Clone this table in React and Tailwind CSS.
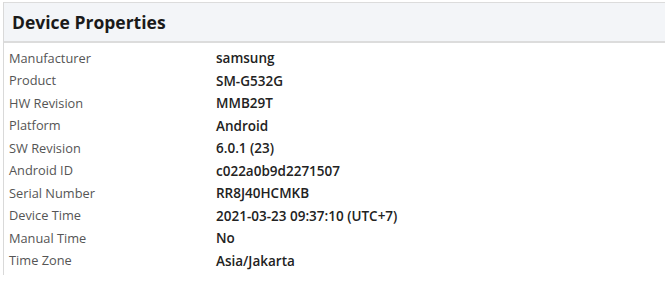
export default function App() {
  const rows = [
    ["Manufacturer", "samsung"],
    ["Product", "SM-G532G"],
    ["HW Revision", "MMB29T"],
    ["Platform", "Android"],
    ["SW Revision", "6.0.1 (23)"],
    ["Android ID", "c022a0b9d2271507"],
    ["Serial Number", "RR8J40HCMKB"],
    ["Device Time", "2021-03-23 09:37:10 (UTC+7)"],
    ["Manual Time", "No"],
    ["Time Zone", "Asia/Jakarta"],
  ];
  return (
    <div className="w-[665px] h-[283px] bg-white overflow-hidden pt-[2px] pl-[3px]" style={{ fontFamily: '"Open Sans", sans-serif' }}>
      <div className="border-l border-[#d9d9d9] h-[273px]">
        <div className="h-[41px] bg-[#f3f5f8] border-t border-b-2 border-[#dcdcdc] flex items-center pl-[8px] pt-[2px]">
          <span className="text-[17.5px] font-bold text-[#1a1a1a] leading-none">Device Properties</span>
        </div>
        <div className="pt-[4px]">
          {rows.map(([k, v]) => (
            <div key={k} className="flex h-[22.5px] items-center">
              <div className="w-[212px] pl-[5px] text-[12.8px] text-[#555]">{k}</div>
              <div className="font-semibold text-[13.5px] text-[#222]">{v}</div>
            </div>
          ))}
        </div>
      </div>
    </div>
  );
}
